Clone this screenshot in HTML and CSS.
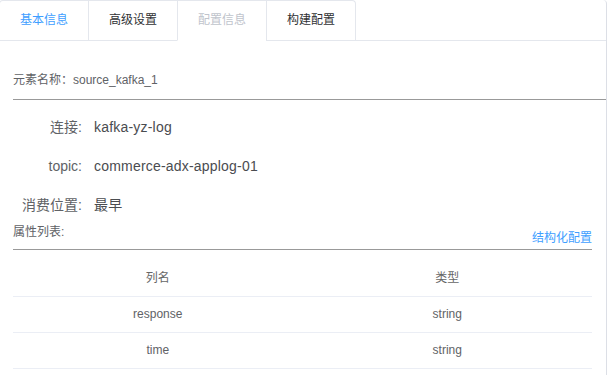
FILE: index.html
```html
<!DOCTYPE html>
<html lang="zh-CN">
  <head>
    <meta charset="UTF-8" />
    <meta name="viewport" content="width=device-width, initial-scale=1.0" />
    <title>配置信息</title>
    <link rel="stylesheet" href="styles.css">
  </head>
  <body>
    <div class="card">
      <div class="tabs-header">
        <div class="tabs-nav">
          <div class="tab tab-active">基本信息</div>
          <div class="tab">高级设置</div>
          <div class="tab tab-current tab-disabled">配置信息</div>
          <div class="tab">构建配置</div>
        </div>
      </div>

      <div class="content">
        <div class="name-row">元素名称：source_kafka_1</div>

        <div class="form">
          <div class="form-item">
            <span class="form-label">连接:</span>
            <span class="form-value">kafka-yz-log</span>
          </div>
          <div class="form-item">
            <span class="form-label">topic:</span>
            <span class="form-value">commerce-adx-applog-01</span>
          </div>
          <div class="form-item">
            <span class="form-label">消费位置:</span>
            <span class="form-value">最早</span>
          </div>
        </div>

        <div class="attr-header">
          <span class="attr-title">属性列表:</span>
          <a class="attr-link">结构化配置</a>
        </div>

        <div class="table">
          <div class="table-row table-head">
            <div class="cell">列名</div>
            <div class="cell">类型</div>
          </div>
          <div class="table-row">
            <div class="cell">response</div>
            <div class="cell">string</div>
          </div>
          <div class="table-row">
            <div class="cell">time</div>
            <div class="cell">string</div>
          </div>
        </div>
      </div>
    </div>
  </body>
</html>
```

FILE: styles.css
```css
* {
  margin: 0;
  padding: 0;
  box-sizing: border-box;
}
body {
  font-family: "Helvetica Neue", Helvetica, "Liberation Sans", "Noto Sans CJK SC", sans-serif;
  background: #fff;
  color: #606266;
  overflow: hidden;
}
.card {
  margin-left: -1px;
  width: 608px;
  min-height: 375px;
  border-right: 1px solid #dcdfe6;
  border-top-right-radius: 4px;
}

.tabs-header {
  height: 41px;
  border-bottom: 1px solid #e4e7ed;
}
.tabs-nav {
  display: inline-flex;
  border: 1px solid #e4e7ed;
  border-bottom: none;
  border-radius: 4px 4px 0 0;
}
.tab {
  height: 40px;
  line-height: 39px;
  padding: 0 20px;
  font-size: 12px;
  color: #303133;
  border-left: 1px solid #e4e7ed;
  border-bottom: 1px solid transparent;
  cursor: pointer;
}
.tab:first-child {
  border-left: none;
}
.tab-active {
  color: #409eff;
}
.tab-current {
  border-bottom-color: #fff;
}
.tab-disabled {
  color: #c0c4cc;
  cursor: default;
}

.content {
  padding: 0 14px;
}
.name-row {
  margin-right: -14px;
  padding: 29px 0 9px;
  line-height: 20px;
  font-size: 12px;
  color: #606266;
  border-bottom: 1px solid #999;
}

.form {
  margin-top: 8px;
}
.form-item {
  display: flex;
  height: 39px;
  line-height: 39px;
  font-size: 14px;
}
.form-label {
  width: 81px;
  padding-right: 12px;
  text-align: right;
  color: #606266;
}
.form-value {
  color: #4a4c50;
  letter-spacing: 0.2px;
}

.attr-header {
  display: flex;
  justify-content: space-between;
  height: 25px;
  border-bottom: 1px solid #999;
  font-size: 12px;
  line-height: 14px;
}
.attr-title {
  align-self: flex-start;
  color: #606266;
}
.attr-link {
  align-self: flex-end;
  margin-bottom: 4px;
  color: #409eff;
  cursor: pointer;
}

.table {
  margin-top: 11px;
  font-size: 12px;
}
.table-row {
  display: grid;
  grid-template-columns: 1fr 1fr;
  height: 36px;
  line-height: 35px;
  border-bottom: 1px solid #ebeef5;
  color: #606266;
}
.table-head {
  color: #666;
}
.cell {
  text-align: center;
}
```
